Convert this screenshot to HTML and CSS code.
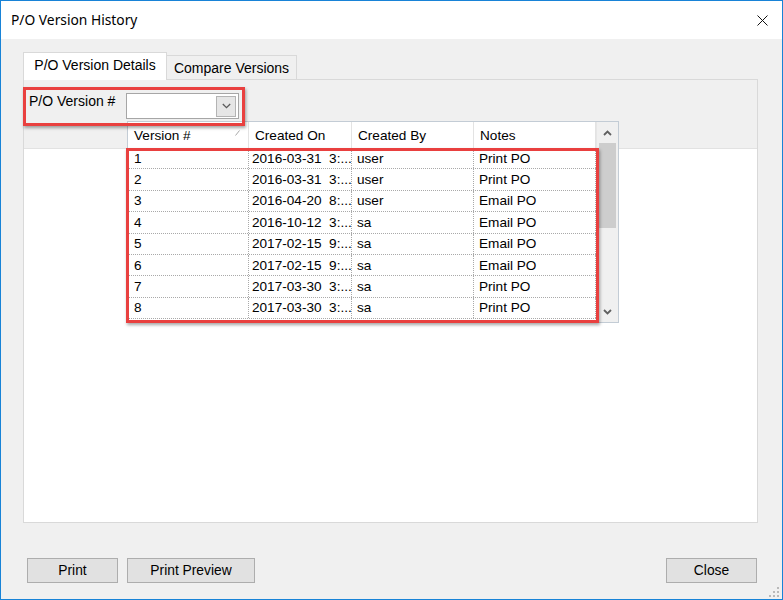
FILE: index.html
```html
<!DOCTYPE html>
<html>
<head>
<meta charset="utf-8">
<title>P/O Version History</title>
<link rel="stylesheet" href="styles.css">
</head>
<body>
<div class="window">
  <div class="titlebar">
    <span class="title">P/O Version History</span>
    <svg class="close" width="11" height="11" viewBox="0 0 11 11"><path d="M0.5 0.5 L10.5 10.5 M10.5 0.5 L0.5 10.5" stroke="#111" stroke-width="1" fill="none"/></svg>
  </div>
  <div class="client">
    <div class="tabs">
      <div class="tab active">P/O Version Details</div>
      <div class="tab">Compare Versions</div>
    </div>
    <div class="tabpage">
      <div class="criteria">
        <span class="crit-label">P/O Version #</span>
        <div class="combo">
          <div class="combo-btn">
            <svg width="9" height="6" viewBox="0 0 9 6"><path d="M0.8 1 L4.5 4.6 L8.2 1" stroke="#5a5a5a" stroke-width="1.3" fill="none"/></svg>
          </div>
        </div>
      </div>
      <div class="panel">
        <div class="dgv">
          <div class="dgv-main">
            <div class="dgv-head">
              <div class="hcell c1">Version #<svg class="sort" width="5" height="6" viewBox="0 0 5 6"><path d="M0.5 5.5 L4.5 0.5" stroke="#a8a8a8" stroke-width="1"/></svg></div>
              <div class="hcell c2">Created On</div>
              <div class="hcell c3">Created By</div>
              <div class="hcell c4">Notes</div>
            </div>
            <div class="row"><div class="cell c1">1</div><div class="cell c2">2016-03-31  3:...</div><div class="cell c3">user</div><div class="cell c4">Print PO</div></div>
            <div class="row"><div class="cell c1">2</div><div class="cell c2">2016-03-31  3:...</div><div class="cell c3">user</div><div class="cell c4">Print PO</div></div>
            <div class="row"><div class="cell c1">3</div><div class="cell c2">2016-04-20  8:...</div><div class="cell c3">user</div><div class="cell c4">Email PO</div></div>
            <div class="row"><div class="cell c1">4</div><div class="cell c2">2016-10-12  3:...</div><div class="cell c3">sa</div><div class="cell c4">Email PO</div></div>
            <div class="row"><div class="cell c1">5</div><div class="cell c2">2017-02-15  9:...</div><div class="cell c3">sa</div><div class="cell c4">Email PO</div></div>
            <div class="row"><div class="cell c1">6</div><div class="cell c2">2017-02-15  9:...</div><div class="cell c3">sa</div><div class="cell c4">Email PO</div></div>
            <div class="row"><div class="cell c1">7</div><div class="cell c2">2017-03-30  3:...</div><div class="cell c3">sa</div><div class="cell c4">Print PO</div></div>
            <div class="row"><div class="cell c1">8</div><div class="cell c2">2017-03-30  3:...</div><div class="cell c3">sa</div><div class="cell c4">Print PO</div></div>
          </div>
          <div class="vscroll">
            <div class="sbtn">
              <svg width="9" height="6" viewBox="0 0 9 6"><path d="M1 5 L4.5 1.5 L8 5" stroke="#606060" stroke-width="1.8" fill="none"/></svg>
            </div>
            <div class="thumb"></div>
            <div class="track"></div>
            <div class="sbtn">
              <svg width="9" height="6" viewBox="0 0 9 6"><path d="M1 1 L4.5 4.5 L8 1" stroke="#606060" stroke-width="1.8" fill="none"/></svg>
            </div>
          </div>
        </div>
      </div>
    </div>
    <div class="buttons">
      <button class="btn btn-print">Print</button>
      <button class="btn btn-preview">Print Preview</button>
      <span class="spacer"></span>
      <button class="btn btn-close">Close</button>
    </div>
  </div>
  <div class="hl hl-combo"></div>
  <div class="hl hl-rows"></div>
  <svg class="grip" width="11" height="11" viewBox="0 0 11 11">
    <rect x="8" y="0" width="2" height="2" fill="#b9b9b9"/>
    <rect x="4" y="4" width="2" height="2" fill="#b9b9b9"/>
    <rect x="8" y="4" width="2" height="2" fill="#b9b9b9"/>
    <rect x="0" y="8" width="2" height="2" fill="#b9b9b9"/>
    <rect x="4" y="8" width="2" height="2" fill="#b9b9b9"/>
    <rect x="8" y="8" width="2" height="2" fill="#b9b9b9"/>
  </svg>
</div>
</body>
</html>
```

FILE: styles.css
```css
* { box-sizing: border-box; }

html, body {
  margin: 0;
  padding: 0;
  background: #ffffff;
}

body {
  font-family: "Liberation Sans", Arial, sans-serif;
  font-size: 13.6px;
  color: #000;
}

.window {
  position: relative;
  width: 783px;
  height: 600px;
  border: 1px solid #1883d7;
  display: flex;
  flex-direction: column;
  background: #f0f0f0;
}

.titlebar {
  height: 38px;
  flex-shrink: 0;
  background: #ffffff;
  display: flex;
  align-items: center;
  padding: 0 14px 0 10px;
}

.title {
  font-family: "Noto Sans", "Open Sans", sans-serif;
  font-size: 13.8px;
  color: #000;
  flex: 1;
  margin-top: -1px;
}

.close {
  display: block;
}

.client {
  flex: 1;
  display: flex;
  flex-direction: column;
  padding: 13px 24px 0 22px;
}

.tabs {
  display: flex;
  align-items: flex-end;
  height: 27px;
}

.tab {
  display: flex;
  align-items: center;
  justify-content: center;
  border: 1px solid #d9d9d9;
  border-bottom: none;
  white-space: nowrap;
  font-size: 14px;
}

.tab.active {
  width: 144px;
  height: 28px;
  margin-bottom: -1px;
  background: #ffffff;
  position: relative;
  z-index: 1;
  padding-bottom: 4px;
}

.tab:not(.active) {
  width: 130px;
  height: 24px;
  border-left: none;
  background: #f0f0f0;
  padding-top: 1px;
}

.tabpage {
  width: 735px;
  height: 444px;
  border: 1px solid #d9d9d9;
  background: #f0f0f0;
  display: flex;
  flex-direction: column;
}

.criteria {
  height: 41px;
  flex-shrink: 0;
  display: flex;
  align-items: flex-start;
  padding-left: 5px;
}

.crit-label {
  width: 97px;
  flex-shrink: 0;
  margin-top: 13px;
  line-height: 16px;
  font-size: 14px;
}

.combo {
  width: 113px;
  height: 26px;
  margin-top: 13px;
  background: #ffffff;
  border: 1px solid #a6a6a6;
  display: flex;
  justify-content: flex-end;
  align-items: center;
  padding-right: 2px;
}

.combo-btn {
  width: 20px;
  height: 21px;
  border: 1px solid #b4b4b4;
  background: #e6e6e6;
  display: flex;
  align-items: center;
  justify-content: center;
}

.panel {
  flex: 1;
  margin-top: 27px;
  background: #ffffff;
  border-top: 1px solid #e2e2e2;
}

.dgv {
  width: 492px;
  height: 202px;
  margin-top: -28px;
  margin-left: 103px;
  border: 1px solid #c3ccd5;
  background: #ffffff;
  display: flex;
}

.dgv-main {
  width: 468px;
  display: flex;
  flex-direction: column;
}

.dgv-head {
  display: flex;
  height: 26px;
  flex-shrink: 0;
  background: #ffffff;
}

.hcell {
  height: 26px;
  display: flex;
  align-items: center;
  padding-left: 6px;
  border-right: 1px solid #e3e3e3;
  white-space: nowrap;
  position: relative;
}

.sort {
  position: absolute;
  right: 8px;
  top: 8px;
}

.c1 { width: 121px; }
.c2 { width: 103px; }
.c3 { width: 122px; }
.c4 { width: 122px; }

.row {
  display: flex;
  height: 21.4px;
  flex-shrink: 0;
  border-bottom: 1px dotted #a9a9a9;
}

.cell {
  display: flex;
  align-items: center;
  border-right: 1px dotted #a9a9a9;
  white-space: pre;
  overflow: hidden;
}

.cell.c1 { padding-left: 6px; }
.cell.c2 { padding-left: 3px; }
.cell.c3 { padding-left: 5px; }
.cell.c4 { padding-left: 5px; }

.vscroll {
  width: 22px;
  display: flex;
  flex-direction: column;
  background: #f0f0f0;
  border-left: 1px solid #e6e6e6;
}

.sbtn {
  height: 21px;
  flex-shrink: 0;
  display: flex;
  align-items: center;
  justify-content: center;
}

.thumb {
  height: 85px;
  flex-shrink: 0;
  margin: 0 2px;
  background: #cdcdcd;
}

.track {
  flex: 1;
}

.buttons {
  display: flex;
  align-items: center;
  margin-top: 35px;
  padding-left: 4px;
  padding-right: 1px;
}

.btn {
  height: 25px;
  border: 1px solid #adadad;
  background: #e1e1e1;
  font-family: "Liberation Sans", Arial, sans-serif;
  font-size: 13.8px;
  color: #000;
  padding: 0;
  margin: 0;
}

.btn-print { width: 91px; }
.btn-preview { width: 128px; margin-left: 9px; }
.btn-close { width: 91px; }

.spacer { flex: 1; }

.hl {
  position: absolute;
  border: 3px solid #e9403f;
  box-shadow: 1px 2px 3px rgba(0, 0, 0, 0.35);
  pointer-events: none;
}

.hl-combo {
  left: 22px;
  top: 86px;
  width: 222px;
  height: 39px;
}

.hl-rows {
  left: 125px;
  top: 147px;
  width: 473px;
  height: 175px;
}

.grip {
  position: absolute;
  right: 2px;
  bottom: 1px;
}
```
